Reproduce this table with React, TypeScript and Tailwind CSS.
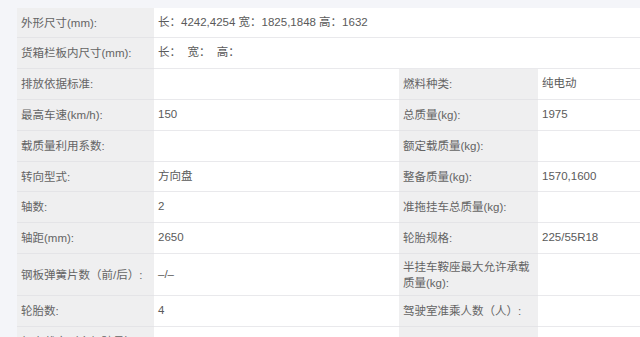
import type { ReactNode } from 'react';

interface SpecRow {
  label: ReactNode;
  value?: string;
  label2?: ReactNode;
  value2?: string;
  height: string;
}

const rows: SpecRow[] = [
  { label: '外形尺寸(mm):', value: '长：4242,4254 宽：1825,1848 高：1632', height: 'h-[30px]' },
  { label: '货箱栏板内尺寸(mm):', value: '长：  宽：  高：', height: 'h-[31px]' },
  { label: '排放依据标准:', value: '', label2: '燃料种类:', value2: '纯电动', height: 'h-[31px]' },
  { label: '最高车速(km/h):', value: '150', label2: '总质量(kg):', value2: '1975', height: 'h-[31px]' },
  { label: '载质量利用系数:', value: '', label2: '额定载质量(kg):', value2: '', height: 'h-[31px]' },
  { label: '转向型式:', value: '方向盘', label2: '整备质量(kg):', value2: '1570,1600', height: 'h-[30px]' },
  { label: '轴数:', value: '2', label2: '准拖挂车总质量(kg):', value2: '', height: 'h-[31px]' },
  { label: '轴距(mm):', value: '2650', label2: '轮胎规格:', value2: '225/55R18', height: 'h-[31px]' },
  {
    label: '钢板弹簧片数（前/后）:',
    value: '–/–',
    label2: (
      <>
        半挂车鞍座最大允许承载
        <br />
        质量(kg):
      </>
    ),
    value2: '',
    height: 'h-[42px]',
  },
  { label: '轮胎数:', value: '4', label2: '驾驶室准乘人数（人）:', value2: '', height: 'h-[31px]' },
  { label: '额定载客（含驾驶员）:', value: '', label2: '', value2: '', height: 'h-[31px]' },
];

function LabelCell({ children, height }: { children: ReactNode; height: string }) {
  return (
    <div className={`${height} flex items-center border-b border-[#e4e4e7] bg-[#efeff0] pl-[4px] leading-[16px] text-[#646464]`}>
      <span>{children}</span>
    </div>
  );
}

function ValueCell({ children, height, wide }: { children?: ReactNode; height: string; wide?: boolean }) {
  return (
    <div
      className={`${height} ${wide ? 'col-span-3' : ''} flex items-center border-b border-[#e9e9ec] bg-white pl-[4px] text-[#5a5a5a]`}
    >
      <span className="whitespace-pre">{children}</span>
    </div>
  );
}

export default function App() {
  return (
    <div
      className="h-[337px] w-[640px] overflow-hidden bg-[#f4f5f9] pl-[17px] pt-[8px] text-[11.5px]"
      style={{ fontFamily: '"Liberation Sans", "Noto Sans CJK SC", sans-serif' }}
    >
      <div className="grid grid-cols-[137px_245px_139px_1fr]">
        {rows.map((row, index) =>
          row.label2 === undefined ? (
            <div key={index} className="contents">
              <LabelCell height={row.height}>{row.label}</LabelCell>
              <ValueCell height={row.height} wide>
                {row.value}
              </ValueCell>
            </div>
          ) : (
            <div key={index} className="contents">
              <LabelCell height={row.height}>{row.label}</LabelCell>
              <ValueCell height={row.height}>{row.value}</ValueCell>
              <LabelCell height={row.height}>{row.label2}</LabelCell>
              <ValueCell height={row.height}>{row.value2}</ValueCell>
            </div>
          ),
        )}
      </div>
    </div>
  );
}
